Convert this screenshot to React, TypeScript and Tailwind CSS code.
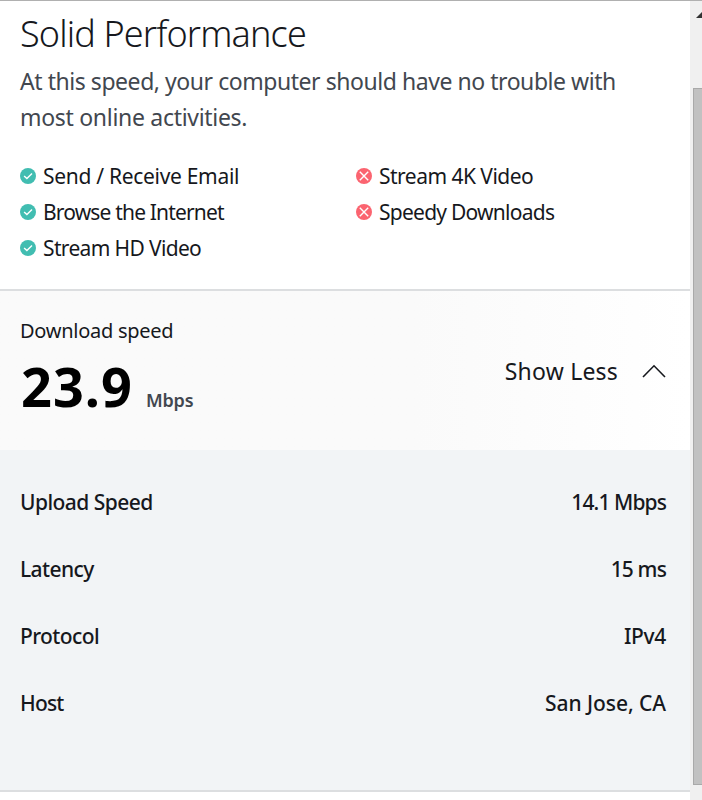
import React from 'react';

interface Activity {
  label: string;
  supported: boolean;
  className: string;
}

interface Detail {
  label: string;
  value: string;
  labelClass: string;
  valueClass: string;
}

const goodActivities: Activity[] = [
  { label: 'Send / Receive Email', supported: true, className: 'tracking-[-0.3px]' },
  { label: 'Browse the Internet', supported: true, className: 'tracking-[-0.83px] word-spacing-[1px]' },
  { label: 'Stream HD Video', supported: true, className: 'tracking-[-0.65px]' },
];

const badActivities: Activity[] = [
  { label: 'Stream 4K Video', supported: false, className: 'tracking-[-0.52px]' },
  { label: 'Speedy Downloads', supported: false, className: 'tracking-[-0.75px]' },
];

const details: Detail[] = [
  { label: 'Upload Speed', value: '14.1 Mbps', labelClass: 'tracking-[-0.54px]', valueClass: 'tracking-[-0.9px]' },
  { label: 'Latency', value: '15 ms', labelClass: 'tracking-[-0.6px]', valueClass: 'tracking-[-0.85px]' },
  { label: 'Protocol', value: 'IPv4', labelClass: 'tracking-[-0.6px]', valueClass: 'tracking-[-0.3px]' },
  { label: 'Host', value: 'San Jose, CA', labelClass: 'tracking-[-0.8px]', valueClass: 'tracking-[-0.05px]' },
];

function StatusIcon({ supported }: { supported: boolean }) {
  return (
    <svg viewBox="0 0 16 16" className="h-4 w-4 flex-none" fill="none" stroke="white" strokeWidth="1.4">
      <circle cx="8" cy="8" r="8" fill={supported ? '#41bdb1' : '#fb6470'} stroke="none" />
      <path d={supported ? 'M4.1 7.9 6.9 10.6 12 5.4' : 'M3.8 3.8 12.2 12.2M12.2 3.8 3.8 12.2'} />
    </svg>
  );
}

function ActivityList({ items }: { items: Activity[] }) {
  return (
    <ul>
      {items.map((item) => (
        <li key={item.label} className="flex h-9 items-center gap-[7px] whitespace-nowrap text-[21px]">
          <StatusIcon supported={item.supported} />
          <span className="pt-0.5">
            <span className={item.className}>{item.label}</span>
          </span>
        </li>
      ))}
    </ul>
  );
}

function Scrollbar() {
  return (
    <div className="flex h-full w-3 flex-none flex-col overflow-hidden bg-[#f0f0f0]">
      <div className="h-[87px] flex-none pt-[11px] pl-[6px]">
        <svg viewBox="0 0 12 6" className="h-[6px] w-3" fill="#333">
          <path d="M0 6 6 0 12 6Z" />
        </svg>
      </div>
      <div className="ml-[3px] h-[697px] flex-none border border-r-0 border-[#a9a9a9] bg-[#c1c1c1]" />
    </div>
  );
}

export default function App() {
  return (
    <div className="flex h-[800px] w-[702px] overflow-hidden border-t border-[#b0b0b0] bg-white font-['Noto_Sans',sans-serif] text-[#16181d]">
      <main className="w-[690px] flex-none">
        <section className="h-[290px] border-b-2 border-[#dcdee0] px-5 pt-[9px]">
          <h1 className="h-[48px] text-[36px] leading-[48px] font-light tracking-[-0.85px] whitespace-nowrap">
            Solid Performance
          </h1>
          <p className="mt-[5px] text-[23px] leading-9 whitespace-nowrap text-[#42474f]">
            <span className="block tracking-[-0.45px]">At this speed, your computer should have no trouble with</span>
            <span className="block tracking-[-0.3px]">most online activities.</span>
          </p>
          <div className="mt-[23px] grid grid-cols-[336px_1fr]">
            <ActivityList items={goodActivities} />
            <ActivityList items={badActivities} />
          </div>
        </section>

        <section className="flex h-[159px] items-center justify-between bg-linear-to-r from-[#fafafa] from-60% to-white pr-6 pl-5">
          <div className="pb-0.5">
            <div className="h-8 text-[20px] leading-6 tracking-[-0.27px] whitespace-nowrap">Download speed</div>
            <div className="flex items-baseline whitespace-nowrap">
              <span className="w-[126px] pl-px text-[54px] leading-[70px] font-bold tracking-[1px] text-black">23.9</span>
              <span className="text-[18px] font-semibold tracking-[-0.2px] text-[#42474f]">Mbps</span>
            </div>
          </div>
          <button className="flex items-center gap-6 whitespace-nowrap">
            <span className="pt-0.5 text-[23px] tracking-[0.2px]">Show Less</span>
            <svg viewBox="0 0 24 14" className="h-[14px] w-6" fill="none" stroke="#16181d" strokeWidth="1.6">
              <path d="M1 13 12 1.8 23 13" />
            </svg>
          </button>
        </section>

        <section className="h-[342px] border-b-2 border-[#dcdee0] bg-[#f2f4f6] pt-[19px] pr-6 pl-5">
          {details.map((row) => (
            <div key={row.label} className="flex h-[67px] items-center justify-between text-[21px] font-medium whitespace-nowrap">
              <span className={row.labelClass}>{row.label}</span>
              <span className={row.valueClass}>{row.value}</span>
            </div>
          ))}
        </section>
      </main>
      <Scrollbar />
    </div>
  );
}
